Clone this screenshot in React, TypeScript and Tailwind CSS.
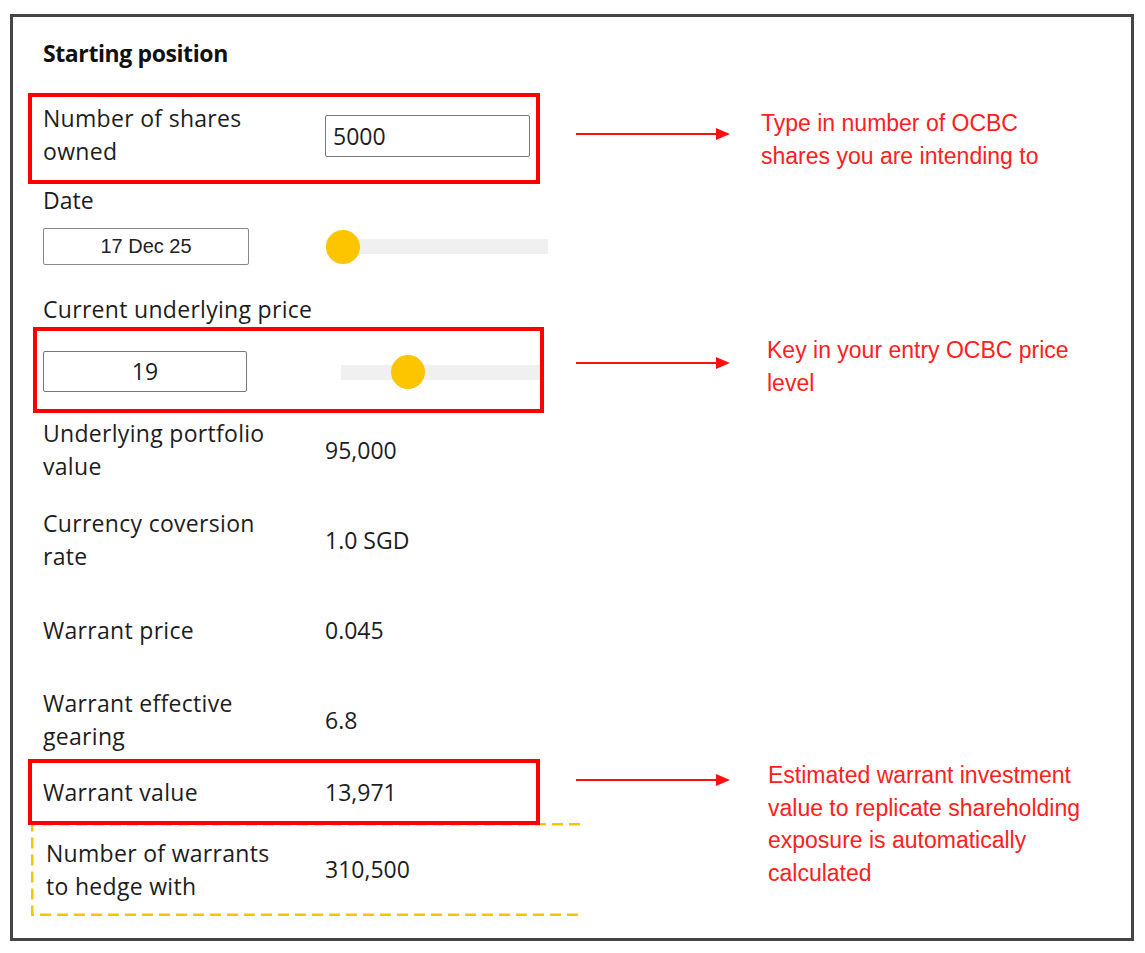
import React from 'react';

const labelFont = "font-['Open_Sans',sans-serif]";
const noteFont = "font-['Liberation_Sans',Arial,sans-serif]";

function Arrow() {
  return (
    <svg width="154" height="14" viewBox="0 0 154 14" className="shrink-0">
      <line x1="0" y1="7" x2="142" y2="7" stroke="#ff1010" strokeWidth="2" />
      <polygon points="140,1 154,7 140,13" fill="#ff1010" />
    </svg>
  );
}

function Note({ lines }: { lines: string[] }) {
  return (
    <div className={`${noteFont} text-[23px] leading-[32.5px] text-[#ff2020]`}>
      {lines.map((l) => (
        <div key={l}>{l}</div>
      ))}
    </div>
  );
}

function Slider({ pos, width }: { pos: number; width: number }) {
  return (
    <div className="relative flex h-[34px] items-center" style={{ width }}>
      <div className="h-[15px] w-full bg-[#f0f0f0]" />
      <div
        className="absolute top-0 h-[34px] w-[34px] rounded-full bg-[#fdc400]"
        style={{ left: pos }}
      />
    </div>
  );
}

function DataRow({ label, value, labelWidth = 282 }: { label: React.ReactNode; value: string; labelWidth?: number }) {
  return (
    <div className="flex items-center">
      <div className="shrink-0 tracking-[0.3px]" style={{ width: labelWidth }}>
        {label}
      </div>
      <div>{value}</div>
    </div>
  );
}

// dashed outline open on the right side
function DashedFrame() {
  return (
    <svg className="pointer-events-none absolute inset-0 h-full w-full" preserveAspectRatio="none">
      <path
        d="M549 1.25 H1.25 V91.75 H549"
        fill="none"
        stroke="#f7c400"
        strokeWidth="2.5"
        strokeDasharray="11 6"
      />
    </svg>
  );
}

export default function App() {
  return (
    <div className="min-h-screen bg-white pl-[10px] pt-[14px]">
      <div
        className={`${labelFont} flex h-[927px] w-[1124px] flex-col border-[3px] border-[#454545] text-[23px] leading-[33px] text-[#1d1d1d]`}
      >
        <h2 className="ml-[30px] mt-[22px] text-[23px] font-bold leading-[28px] tracking-[-0.4px] text-[#111]">
          Starting position
        </h2>

        {/* shares owned */}
        <div className="mt-[26px] flex items-center">
          <div className="ml-[15px] flex h-[91px] w-[512px] shrink-0 items-start border-4 border-[#ff0000] pl-[11px]">
            <div className="mt-[5px] w-[282px] shrink-0 tracking-[0.3px]">
              Number of shares
              <br />
              owned
            </div>
            <div className="mt-[18px] flex h-[42px] w-[205px] items-center rounded-[2px] border border-[#777] pl-[7px]">
              5000
            </div>
          </div>
          <div className="ml-[36px] mt-[-10px]">
            <Arrow />
          </div>
          <div className="ml-[31px] mt-[2px]">
            <Note lines={['Type in number of OCBC', 'shares you are intending to']} />
          </div>
        </div>

        {/* date */}
        <div className="ml-[30px]">Date</div>
        <div className="ml-[30px] mt-[11px] flex items-center">
          <div
            className={`${noteFont} flex h-[37px] w-[206px] items-center justify-center rounded-[2px] border border-[#888] text-[20px] text-[#222]`}
          >
            17 Dec 25
          </div>
          <div className="ml-[77px]">
            <Slider pos={0} width={222} />
          </div>
        </div>

        {/* underlying price */}
        <div className="ml-[30px] mt-[28px] tracking-[0.3px]">Current underlying price</div>
        <div className="flex items-center">
          <div className="ml-[20px] mt-[1px] flex h-[86px] w-[511px] shrink-0 items-center border-4 border-[#ff0000] pl-[6px]">
            <div className="mt-[2px] flex h-[41px] w-[206px] items-center justify-center rounded-[2px] border border-[#777]">
              19
            </div>
            <div className="ml-[94px] mt-[4px]">
              <Slider pos={50} width={199} />
            </div>
          </div>
          <div className="ml-[32px] mt-[-14px]">
            <Arrow />
          </div>
          <div className="ml-[37px] mt-[-6px]">
            <Note lines={['Key in your entry OCBC price', 'level']} />
          </div>
        </div>

        {/* computed figures */}
        <div className="ml-[30px] mt-[4px]">
          <DataRow
            label={
              <>
                Underlying portfolio
                <br />
                value
              </>
            }
            value="95,000"
          />
        </div>
        <div className="ml-[30px] mt-[24px]">
          <DataRow
            label={
              <>
                Currency coversion
                <br />
                rate
              </>
            }
            value="1.0 SGD"
          />
        </div>
        <div className="ml-[30px] mt-[41px]">
          <DataRow label="Warrant price" value="0.045" />
        </div>
        <div className="ml-[30px] mt-[40px]">
          <DataRow
            label={
              <>
                Warrant effective
                <br />
                gearing
              </>
            }
            value="6.8"
          />
        </div>

        {/* warrant value + hedge count */}
        <div className="mt-[6px] flex items-start">
          <div className="flex w-[570px] shrink-0 flex-col">
            <div className="relative z-10 ml-[15px] flex h-[66px] w-[512px] items-center border-4 border-[#ff0000] pl-[11px]">
              <DataRow label="Warrant value" value="13,971" />
            </div>
            <div className="relative ml-[18px] mt-[-2px] flex h-[93px] w-[549px] items-center pl-[15px]">
              <DashedFrame />
              <DataRow
                labelWidth={279}
                label={
                  <>
                    Number of warrants
                    <br />
                    to hedge with
                  </>
                }
                value="310,500"
              />
            </div>
          </div>
          <div className="ml-[-7px] mt-[14px]">
            <Arrow />
          </div>
          <div className="ml-[38px]">
            <Note
              lines={[
                'Estimated warrant investment',
                'value to replicate shareholding',
                'exposure is automatically',
                'calculated',
              ]}
            />
          </div>
        </div>
      </div>
    </div>
  );
}
